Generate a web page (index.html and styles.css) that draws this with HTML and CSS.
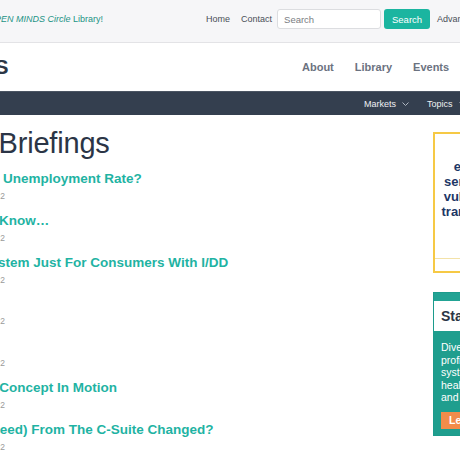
FILE: index.html
```html
<!DOCTYPE html>
<html lang="en">
<head>
<meta charset="utf-8">
<title>Briefings</title>
<link rel="stylesheet" href="styles.css">
</head>
<body>
<div class="topbar">
  <p class="welcome">Welcome to the <em>OPEN MINDS Circle</em> Library!</p>
  <nav class="toplinks">
    <a class="toplink" href="#">Home</a>
    <a class="toplink contact" href="#">Contact</a>
    <form class="search">
      <input class="search-input" type="text" placeholder="Search">
      <button class="search-btn" type="button">Search</button>
    </form>
    <a class="toplink advanced" href="#">Advanced Search</a>
  </nav>
</div>

<header class="masthead">
  <div class="logo">OPEN MINDS</div>
  <nav class="mainnav">
    <a href="#">About</a>
    <a href="#">Library</a>
    <a href="#">Events</a>
    <a href="#">Membership</a>
  </nav>
</header>

<nav class="subnav">
  <a class="subitem" href="#">Markets <svg class="chev" width="7" height="4" viewBox="0 0 7 4"><polyline points="0.5,0.5 3.5,3.5 6.5,0.5" fill="none" stroke="#aeb6c1" stroke-width="1"/></svg></a>
  <a class="subitem" href="#">Topics <svg class="chev" width="7" height="4" viewBox="0 0 7 4"><polyline points="0.5,0.5 3.5,3.5 6.5,0.5" fill="none" stroke="#aeb6c1" stroke-width="1"/></svg></a>
  <a class="subitem" href="#">Services</a>
</nav>

<div class="content">
  <main class="main">
    <h1 class="page-title">Our Briefings</h1>
    <ul class="briefings">
      <li class="item"><a class="item-title" href="#">Why The Unemployment Rate?</a><div class="item-date">August 31, 2022</div></li>
      <li class="item"><a class="item-title" href="#">Need To Know…</a><div class="item-date">August 29, 2022</div></li>
      <li class="item"><a class="item-title" href="#">A Big System Just For Consumers With I/DD</a><div class="item-date">August 24, 2022</div></li>
      <li class="item"><a class="item-title" href="#">In Brief</a><div class="item-date">August 22, 2022</div></li>
      <li class="item"><a class="item-title" href="#">The Gap</a><div class="item-date">August 17, 2022</div></li>
      <li class="item"><a class="item-title" href="#">Our Key Concept In Motion</a><div class="item-date">August 10, 2022</div></li>
      <li class="item"><a class="item-title" href="#">Tie (Or Need) From The C-Suite Changed?</a><div class="item-date">August 03, 2022</div></li>
    </ul>
  </main>
  <aside class="sidebar">
    <div class="promo">
      <p class="promo-body">empowering the leaders who<br>serve people with complex lives<br>vulnerable populations, through<br>transformative care and support.</p>
      <div class="promo-foot"></div>
    </div>
    <div class="widget">
      <div class="widget-bar"></div>
      <h2 class="widget-title">Stay Connected</h2>
      <div class="widget-body">
        <p class="widget-text">Dive deeper into the<br>profiles of state<br>systems of care for<br>health and human services<br>and more.</p>
        <a class="widget-btn" href="#">Learn More</a>
      </div>
    </div>
  </aside>
</div>
</body>
</html>
```

FILE: styles.css
```css
html, body {
  margin: 0;
  padding: 0;
  overflow: hidden;
}
body {
  width: 460px;
  height: 460px;
  background: #ffffff;
  font-family: "Liberation Sans", Arial, sans-serif;
  color: #2b3546;
}
a { text-decoration: none; color: inherit; }

/* top utility bar */
.topbar {
  height: 42px;
  background: #f6f6f8;
  border-bottom: 1px solid #e3e3e6;
  display: flex;
  align-items: flex-start;
}
.welcome {
  flex: 0 0 300px;
  margin: 9px 0 0 -197px;
  text-align: right;
  white-space: nowrap;
  font-size: 9px;
  line-height: 20px;
  color: #1c9385;
}
.welcome em { font-style: italic; }
.toplinks {
  display: flex;
  align-items: center;
  margin: 9px 0 0 103px;
  flex-shrink: 0;
  white-space: nowrap;
}
.toplink {
  font-size: 9px;
  color: #4a4f57;
  line-height: 20px;
  flex-shrink: 0;
}
.contact { margin-left: 11px; }
.search {
  display: flex;
  margin: 0 0 0 5px;
  flex-shrink: 0;
}
.search-input {
  box-sizing: border-box;
  width: 104px;
  height: 20px;
  border: 1px solid #dcdde0;
  border-radius: 3px;
  background: #ffffff;
  padding: 0 6px;
  font-family: "Liberation Sans", Arial, sans-serif;
  font-size: 9.5px;
  color: #333;
  outline: none;
}
.search-input::placeholder { color: #7a7d82; }
.search-btn {
  box-sizing: border-box;
  width: 46px;
  height: 20px;
  margin-left: 3px;
  border: none;
  border-radius: 3px;
  background: #1bb5a0;
  color: #ffffff;
  font-family: "Liberation Sans", Arial, sans-serif;
  font-size: 9.5px;
  padding: 0;
}
.advanced { margin-left: 7px; }

/* masthead */
.masthead {
  height: 48px;
  background: #ffffff;
  display: flex;
  align-items: center;
}
.logo {
  flex: 0 0 200px;
  margin-left: -192px;
  text-align: right;
  white-space: nowrap;
  font-size: 21px;
  font-weight: bold;
  color: #2c3645;
  letter-spacing: -0.5px;
}
.mainnav {
  display: flex;
  gap: 21px;
  margin-left: 294px;
  flex-shrink: 0;
  white-space: nowrap;
}
.mainnav a {
  font-size: 11px;
  font-weight: bold;
  color: #6b7280;
}

/* dark sub navigation */
.subnav {
  height: 23px;
  background: #343f4f;
  border-top: 1px solid #4b5563;
  display: flex;
  align-items: center;
  padding-left: 364px;
  gap: 18px;
  white-space: nowrap;
}
.subitem {
  display: flex;
  align-items: center;
  gap: 6px;
  font-size: 9px;
  color: #eef0f3;
  flex-shrink: 0;
}
.chev { display: block; }

/* content */
.content {
  display: flex;
  gap: 18px;
  margin-left: -57px;
}
.main {
  flex: 0 0 472px;
  padding-top: 11px;
}
.page-title {
  margin: 0 0 10px 0;
  font-size: 29px;
  line-height: 34px;
  font-weight: normal;
  color: #2b3546;
  white-space: nowrap;
  letter-spacing: -0.2px;
}
.briefings {
  list-style: none;
  margin: 0;
  padding: 0;
}
.item {
  margin-bottom: 9.8px;
  white-space: nowrap;
}
.item-title {
  display: block;
  font-size: 13.5px;
  line-height: 18px;
  font-weight: bold;
  color: #1fb3a3;
}
.item-date {
  margin-top: 2px;
  font-size: 8.5px;
  line-height: 12px;
  color: #9a9a9a;
}

/* sidebar */
.sidebar {
  flex: 0 0 220px;
  padding-top: 17px;
}
.promo {
  box-sizing: border-box;
  height: 141px;
  border: 2px solid #f6c945;
  display: flex;
  flex-direction: column;
}
.promo-body {
  flex: 1;
  margin: 0;
  padding-top: 25px;
  text-align: center;
  white-space: nowrap;
  font-size: 13px;
  line-height: 15px;
  font-weight: bold;
  color: #1d3766;
}
.promo-foot {
  height: 12px;
  border-top: 1px solid #f3e2a8;
}
.widget {
  margin-top: 19px;
  border: 1px solid #1c9b8c;
}
.widget-bar {
  height: 8px;
  background: #22a394;
}
.widget-title {
  margin: 0;
  height: 30px;
  line-height: 30px;
  padding-left: 7px;
  background: #ffffff;
  font-size: 14px;
  font-weight: bold;
  color: #2b3546;
  white-space: nowrap;
}
.widget-body {
  background: #1f9e8e;
  padding: 10px 7px 6px 7px;
}
.widget-text {
  margin: 0 0 6px 0;
  font-size: 10.5px;
  line-height: 12.5px;
  color: #ffffff;
  white-space: nowrap;
}
.widget-btn {
  display: inline-block;
  height: 17px;
  line-height: 17px;
  padding: 0 8px;
  background: #f28c4a;
  color: #ffffff;
  font-size: 10.5px;
  font-weight: bold;
}
```
